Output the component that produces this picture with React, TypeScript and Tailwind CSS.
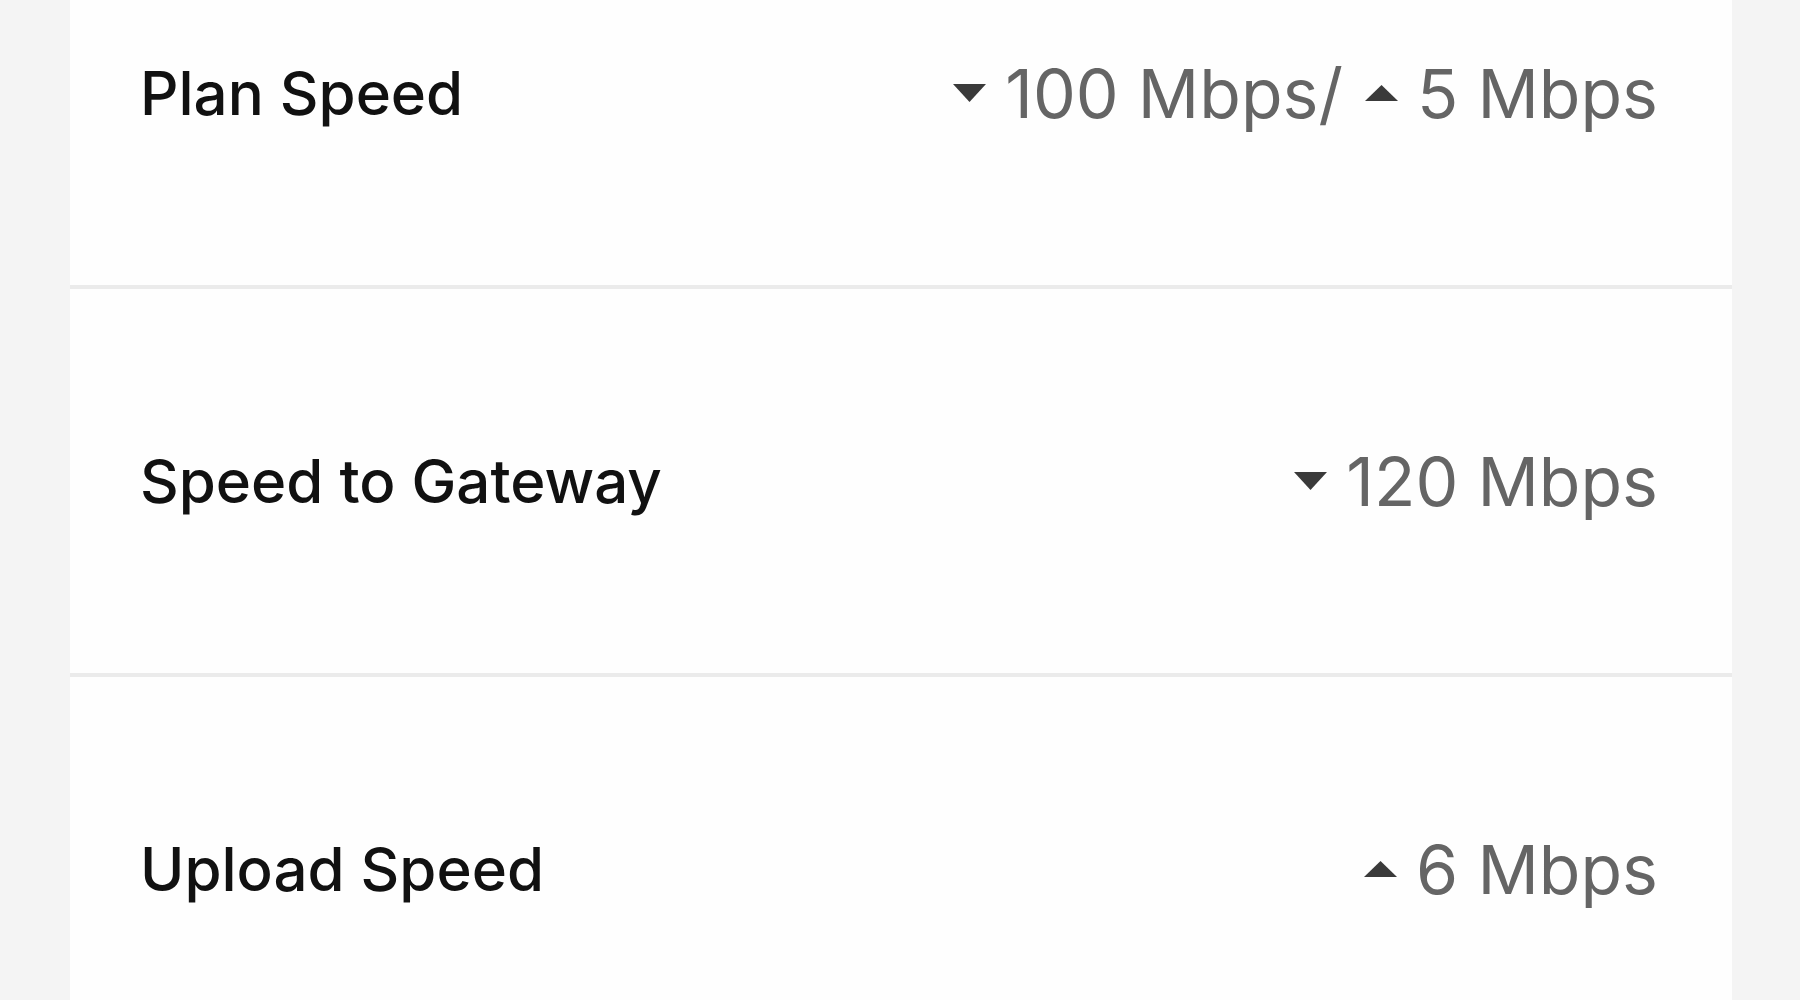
import React from "react";

type Dir = "down" | "up";

const Tri = ({ dir }: { dir: Dir }) => (
	<svg width="33" height="18" viewBox="0 0 33 18" className="shrink-0">
		{dir === "down" ? (
			<polygon points="0,0 33,0 16.5,18" fill="#3a3a3a" />
		) : (
			<polygon points="16.5,1 33,17 0,17" fill="#3a3a3a" />
		)}
	</svg>
);

const rows: { label: string; parts: { dir: Dir; text: string }[] }[] = [
	{
		label: "Plan Speed",
		parts: [
			{ dir: "down", text: "100 Mbps/" },
			{ dir: "up", text: "5 Mbps" },
		],
	},
	{ label: "Speed to Gateway", parts: [{ dir: "down", text: "120 Mbps" }] },
	{ label: "Upload Speed", parts: [{ dir: "up", text: "6 Mbps" }] },
];

const App = () => {
	return (
		<div
			className="h-screen overflow-hidden bg-[#f4f4f4] pl-[70px] pr-[68px]"
			style={{ fontFamily: "Inter, 'Noto Sans', sans-serif" }}
		>
			<div className="-mt-[99px] flex flex-col gap-[4px] bg-[#ebebeb]">
				{rows.map((row) => (
					<div
						key={row.label}
						className="h-[384px] bg-[#fefefe] flex items-center justify-between pl-[70px] pr-[74px]"
					>
						<span className="text-[60px] font-medium text-[#111111]">
							{row.label}
						</span>
						<div className="flex items-center gap-[22px]">
							{row.parts.map((p) => (
								<div key={p.text} className="flex items-center gap-[19px]">
									<Tri dir={p.dir} />
									<span className="text-[68px] text-[#656565]">
										{p.text}
									</span>
								</div>
							))}
						</div>
					</div>
				))}
			</div>
		</div>
	);
};

export default App;
